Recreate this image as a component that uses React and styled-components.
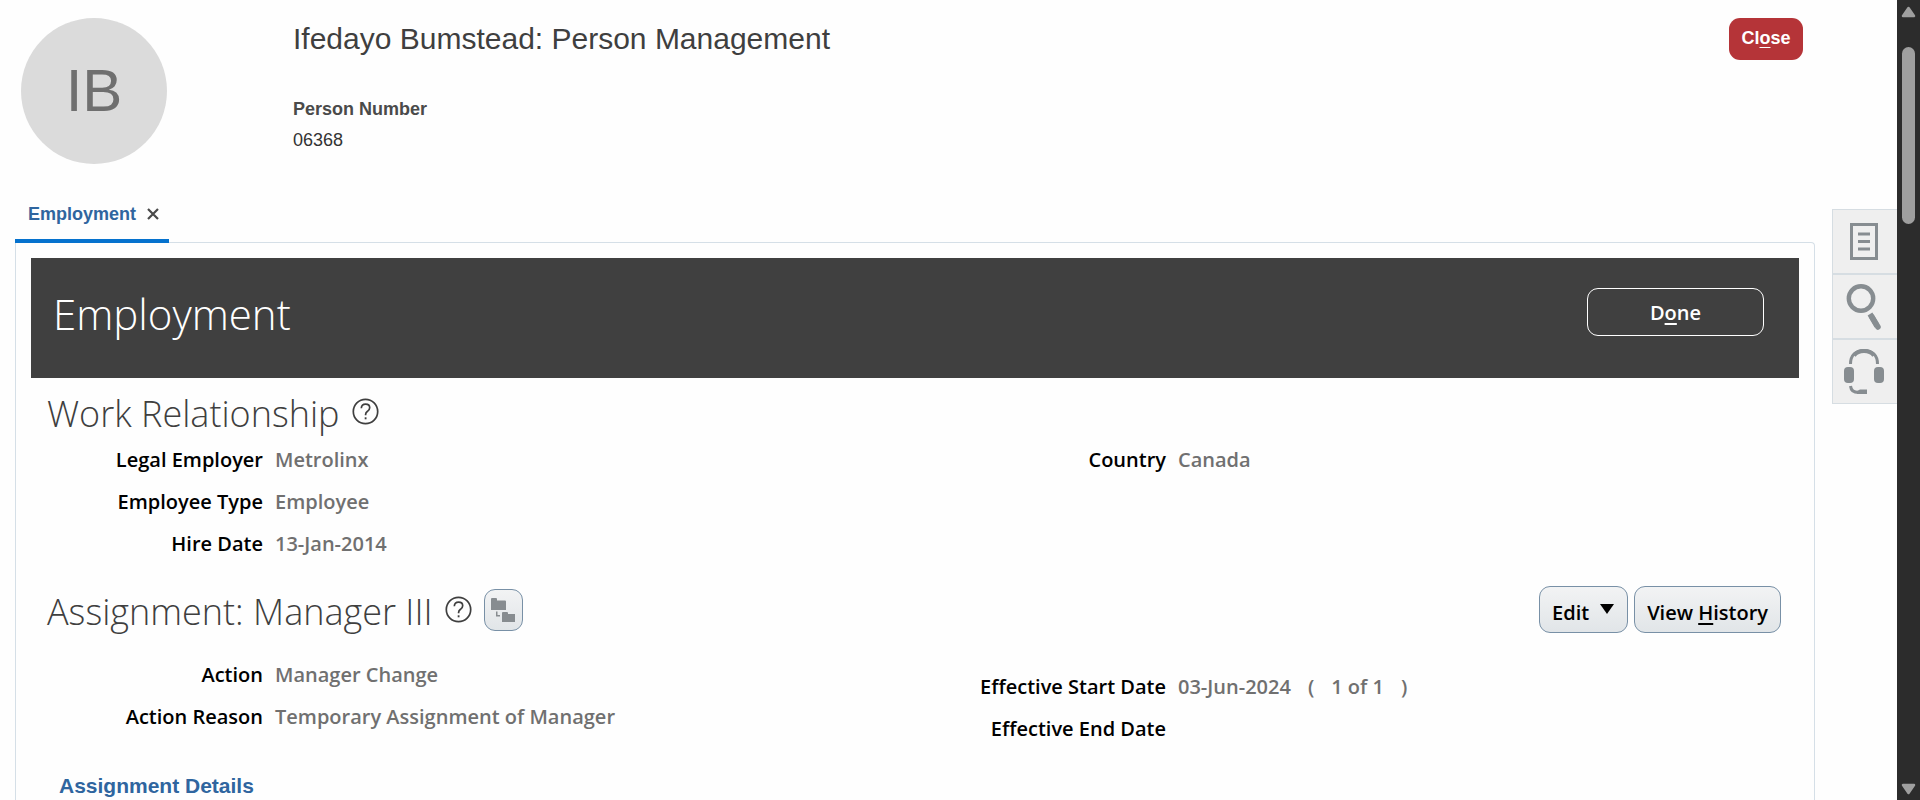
import React from "react";
import styled, { createGlobalStyle, css } from "styled-components";

const sans = `"Liberation Sans", Arial, sans-serif`;
const humanist = `"Segoe UI", "Open Sans", "Noto Sans", sans-serif`;

const GlobalStyle = createGlobalStyle`
  *, *::before, *::after { box-sizing: border-box; }
  html, body { margin: 0; padding: 0; background: #fefefe; }
  body { font-family: ${sans}; color: #3f3f3f; overflow: hidden; }
  h1, h2, h3, p, dl, dd, dt { margin: 0; }
  button { font: inherit; cursor: pointer; padding: 0; }
`;

const Page = styled.div`
  display: flex;
  height: 100vh;
  overflow: hidden;
`;

const Main = styled.main`
  flex: 1;
  min-width: 0;
  display: flex;
  flex-direction: column;
  padding: 18px 17px 0 15px;
`;

const PersonHeader = styled.header`
  display: flex;
  align-items: flex-start;
  height: 173px;
  padding: 0 12px 0 6px;
`;

const Avatar = styled.div`
  flex: none;
  width: 146px;
  height: 146px;
  border-radius: 50%;
  background: #dbdbdb;
  color: #6f6f6f;
  font-size: 60px;
  line-height: 146px;
  text-align: center;
`;

const PersonInfo = styled.div`
  flex: 1;
  padding-left: 126px;
`;

const PersonTitle = styled.h1`
  font-size: 30px;
  font-weight: 400;
  line-height: 42px;
`;

const PersonFacts = styled.dl`
  padding-top: 34px;
  font-size: 18px;
  line-height: 31px;

  dt { font-weight: 700; color: #4a4a4a; }
  dd { color: #333; }
`;

const CloseButton = styled.button`
  width: 74px;
  height: 42px;
  border: 0;
  border-radius: 11px;
  background: #b53438;
  color: #fff;
  font-size: 18px;
  font-weight: 700;
  line-height: 40px;
  padding-bottom: 2px;
`;

const AccessKey = styled.span`
  text-decoration: underline;
  text-underline-offset: 3px;
  text-decoration-thickness: ${(p) => (p.$thick ? "2px" : "1px")};
`;

const TabBar = styled.nav`
  display: flex;
`;

const Tab = styled.div`
  display: flex;
  align-items: center;
  gap: 11px;
  height: 52px;
  margin-bottom: -1px;
  padding: 0 10px 2px 13px;
  border-bottom: 4px solid #0572ce;
  z-index: 1;
`;

const TabLink = styled.a`
  color: #2f659f;
  font-size: 18px;
  font-weight: 700;
  line-height: 24px;
  text-decoration: none;
`;

const PlainButton = styled.button`
  display: flex;
  align-items: center;
  justify-content: center;
  border: 0;
  background: none;
  color: inherit;
`;

const Panel = styled.section`
  flex: 1;
  min-height: 0;
  padding: 15px;
  border: 1px solid #d5dfe7;
  border-bottom: 0;
  border-radius: 0 4px 0 0;
  font-family: ${humanist};
`;

const Banner = styled.div`
  display: flex;
  align-items: flex-start;
  justify-content: space-between;
  height: 120px;
  padding: 30px 35px 0 22px;
  background: #404040;
  color: #fff;
`;

const BannerTitle = styled.h2`
  font-size: 42px;
  font-weight: 300;
  line-height: 52px;
`;

const DoneButton = styled.button`
  width: 177px;
  height: 48px;
  border: 1px solid #fff;
  border-radius: 11px;
  background: transparent;
  color: #fff;
  font-size: 20px;
  font-weight: 600;
`;

const SectionHead = styled.div`
  display: flex;
  align-items: center;
  gap: 12px;
  height: ${(p) => p.$height}px;
  padding: ${(p) => (p.$first ? "6px" : "0")} 18px 0 16px;
`;

const SectionTitle = styled.h2`
  padding-top: 4px;
  font-size: 36px;
  font-weight: 300;
  line-height: 48px;
`;

const Actions = styled.div`
  display: flex;
  gap: 6px;
  margin-left: auto;
`;

const softButton = css`
  border: 1px solid #7890a6;
  border-radius: 11px;
  background: linear-gradient(#f2f3f4, #e1e5e8);
  color: #000;
`;

const TreeButton = styled.button`
  ${softButton}
  display: flex;
  align-items: center;
  justify-content: center;
  width: 39px;
  height: 42px;
`;

const ToolButton = styled.button`
  ${softButton}
  display: flex;
  align-items: center;
  justify-content: center;
  height: 47px;
  padding: 7px 12px 0;
  font-size: 20px;
  font-weight: 600;
  line-height: 28px;
  white-space: pre;

  svg { margin: 0 1px 8px 11px; }
`;

const Columns = styled.div`
  display: grid;
  grid-template-columns: 1fr 1fr;
`;

const Fields = styled.dl`
  padding-top: ${(p) => p.$top || 0}px;
`;

const FieldRow = styled.div`
  display: grid;
  grid-template-columns: ${(p) => (p.$wide ? "251px" : "232px")} 1fr;
  column-gap: 12px;
  font-size: 20px;
  font-weight: 600;
  line-height: 42px;
  white-space: nowrap;
`;

const Label = styled.dt`
  color: #000;
  text-align: right;
`;

const Value = styled.dd`
  display: flex;
  gap: 17px;
  color: #707070;
`;

const DetailsTitle = styled.h3`
  padding: 22px 0 0 28px;
  color: #2f659f;
  font-family: ${sans};
  font-size: 21px;
  font-weight: 700;
  line-height: 28px;
`;

const SideRail = styled.aside`
  display: flex;
  flex-direction: column;
  flex: none;
  width: 65px;
  padding-top: 209px;
`;

const RailButton = styled.button`
  display: flex;
  align-items: center;
  justify-content: center;
  height: 65px;
  padding-right: 2px;
  border: 1px solid #d6dde2;
  border-right: 0;
  background: #efefef;
`;

const ScrollTrack = styled.div`
  display: flex;
  flex-direction: column;
  align-items: center;
  flex: none;
  width: 23px;
  padding: 6px 0 5px;
  background: #2c2c2c;
`;

const ScrollThumb = styled.div`
  width: 13px;
  height: 177px;
  margin: 29px 0 auto;
  border-radius: 7px;
  background: #9f9f9f;
`;

function HelpIcon() {
  return (
    <svg width="27" height="27" viewBox="0 0 27 27" fill="none" stroke="#3f3f3f" strokeWidth="1.7">
      <circle cx="13.5" cy="13.5" r="12.2" />
      <path d="M9.3 10.2c.2-2.6 1.900-4 4.300-4 2.400 0 4.100 1.400 4.100 3.600 0 1.700-.9 2.500-2.200 3.500-1.400 1-1.900 1.600-1.900 3.200v.7" />
      <rect x="12.7" y="19.3" width="1.8" height="2" fill="#3f3f3f" stroke="none" />
    </svg>
  );
}

function CloseIcon() {
  return (
    <svg width="12" height="12" viewBox="0 0 12 12" stroke="#4a4a4a" strokeWidth="2.2">
      <path d="M1 1l10 10M11 1L1 11" />
    </svg>
  );
}

function TreeIcon() {
  return (
    <svg width="26" height="26" viewBox="0 0 26 26" fill="#878c90">
      <path d="M1 2q0-1 1-1h4q1 0 1 1v1.500h8q1 0 1 1V13H1z" />
      <path d="M12 16q0-1 1-1h4q1 0 1 1v1h7v8H12z" />
      <path d="M6 14.500v5h4v-1.500h-2.500v-3.500z" />
    </svg>
  );
}

function CaretIcon() {
  return (
    <svg width="14" height="10" viewBox="0 0 14 10">
      <path d="M0 0h14L7 10z" fill="#000" />
    </svg>
  );
}

function NotesIcon() {
  return (
    <svg width="28" height="37" viewBox="0 0 28 37" fill="none" stroke="#878d91" strokeWidth="3">
      <path d="M1.5 1.5h25v34h-25zM8 11h12M8 18.500h12M8 26h12" />
    </svg>
  );
}

function SearchIcon() {
  return (
    <svg width="36" height="48" viewBox="0 0 36 48" fill="none" stroke="#878d91">
      <circle cx="15" cy="15.5" r="12.2" strokeWidth="4.4" />
      <path d="M24 31l7 12" strokeWidth="5.5" />
      <path d="M26 34l6 10" strokeWidth="5.5" strokeLinecap="round" />
    </svg>
  );
}

function HeadsetIcon() {
  return (
    <svg width="40" height="47" viewBox="0 0 40 47" fill="none" stroke="#878d91" strokeWidth="3">
      <path d="M6.500 16C6.500 7 12 2.500 20 2.500S33.500 7 33.500 16" />
      <path d="M10 7.500C12.500 4 16 3 20 3s7.500 1 10 4.500" strokeWidth="4" />
      <rect x="0" y="19" width="10" height="16" rx="4" fill="#878d91" stroke="none" />
      <rect x="30" y="19" width="10" height="16" rx="4" fill="#878d91" stroke="none" />
      <path d="M6.500 38c.5 4.500 3 6.500 8 6.500" />
      <path d="M13 43l3-1.500h7V46H13z" fill="#878d91" stroke="none" />
    </svg>
  );
}

function ScrollArrow({ down }) {
  return (
    <svg width="15" height="12" viewBox="0 0 15 12">
      <path
        d={down ? "M2 2h11L7.500 10z" : "M7.500 2L13 10H2z"}
        fill="#9f9f9f"
        stroke="#9f9f9f"
        strokeWidth="2.5"
        strokeLinejoin="round"
      />
    </svg>
  );
}

function Field({ label, wide, children }) {
  return (
    <FieldRow $wide={wide}>
      <Label>{label}</Label>
      <Value>{children}</Value>
    </FieldRow>
  );
}

export default function App() {
  return (
    <>
      <GlobalStyle />
      <Page>
        <Main>
          <PersonHeader>
            <Avatar>IB</Avatar>
            <PersonInfo>
              <PersonTitle>Ifedayo Bumstead: Person Management</PersonTitle>
              <PersonFacts>
                <dt>Person Number</dt>
                <dd>06368</dd>
              </PersonFacts>
            </PersonInfo>
            <CloseButton type="button">
              Cl<AccessKey>o</AccessKey>se
            </CloseButton>
          </PersonHeader>

          <TabBar>
            <Tab>
              <TabLink href="#employment">Employment</TabLink>
              <PlainButton type="button" aria-label="Close tab">
                <CloseIcon />
              </PlainButton>
            </Tab>
          </TabBar>

          <Panel id="employment">
            <Banner>
              <BannerTitle>Employment</BannerTitle>
              <DoneButton type="button">
                D<AccessKey $thick>o</AccessKey>ne
              </DoneButton>
            </Banner>

            <SectionHead $height={61} $first>
              <SectionTitle>Work Relationship</SectionTitle>
              <PlainButton type="button" aria-label="Help">
                <HelpIcon />
              </PlainButton>
            </SectionHead>
            <Columns>
              <Fields>
                <Field label="Legal Employer">Metrolinx</Field>
                <Field label="Employee Type">Employee</Field>
                <Field label="Hire Date">13-Jan-2014</Field>
              </Fields>
              <Fields>
                <Field label="Country" wide>Canada</Field>
              </Fields>
            </Columns>

            <SectionHead $height={89}>
              <SectionTitle>Assignment: Manager III</SectionTitle>
              <PlainButton type="button" aria-label="Help">
                <HelpIcon />
              </PlainButton>
              <TreeButton type="button" aria-label="Show hierarchy">
                <TreeIcon />
              </TreeButton>
              <Actions>
                <ToolButton type="button">
                  Edit
                  <CaretIcon />
                </ToolButton>
                <ToolButton type="button">
                  View <AccessKey $thick>H</AccessKey>istory
                </ToolButton>
              </Actions>
            </SectionHead>
            <Columns>
              <Fields>
                <Field label="Action">Manager Change</Field>
                <Field label="Action Reason">Temporary Assignment of Manager</Field>
              </Fields>
              <Fields $top={12}>
                <Field label="Effective Start Date" wide>
                  <span>03-Jun-2024</span>
                  <span>(</span>
                  <span>1 of 1</span>
                  <span>)</span>
                </Field>
                <Field label="Effective End Date" wide />
              </Fields>
            </Columns>
            <DetailsTitle>Assignment Details</DetailsTitle>
          </Panel>
        </Main>

        <SideRail>
          <RailButton type="button" aria-label="Notes">
            <NotesIcon />
          </RailButton>
          <RailButton type="button" aria-label="Search">
            <SearchIcon />
          </RailButton>
          <RailButton type="button" aria-label="Support">
            <HeadsetIcon />
          </RailButton>
        </SideRail>

        <ScrollTrack aria-hidden="true">
          <ScrollArrow />
          <ScrollThumb />
          <ScrollArrow down />
        </ScrollTrack>
      </Page>
    </>
  );
}
